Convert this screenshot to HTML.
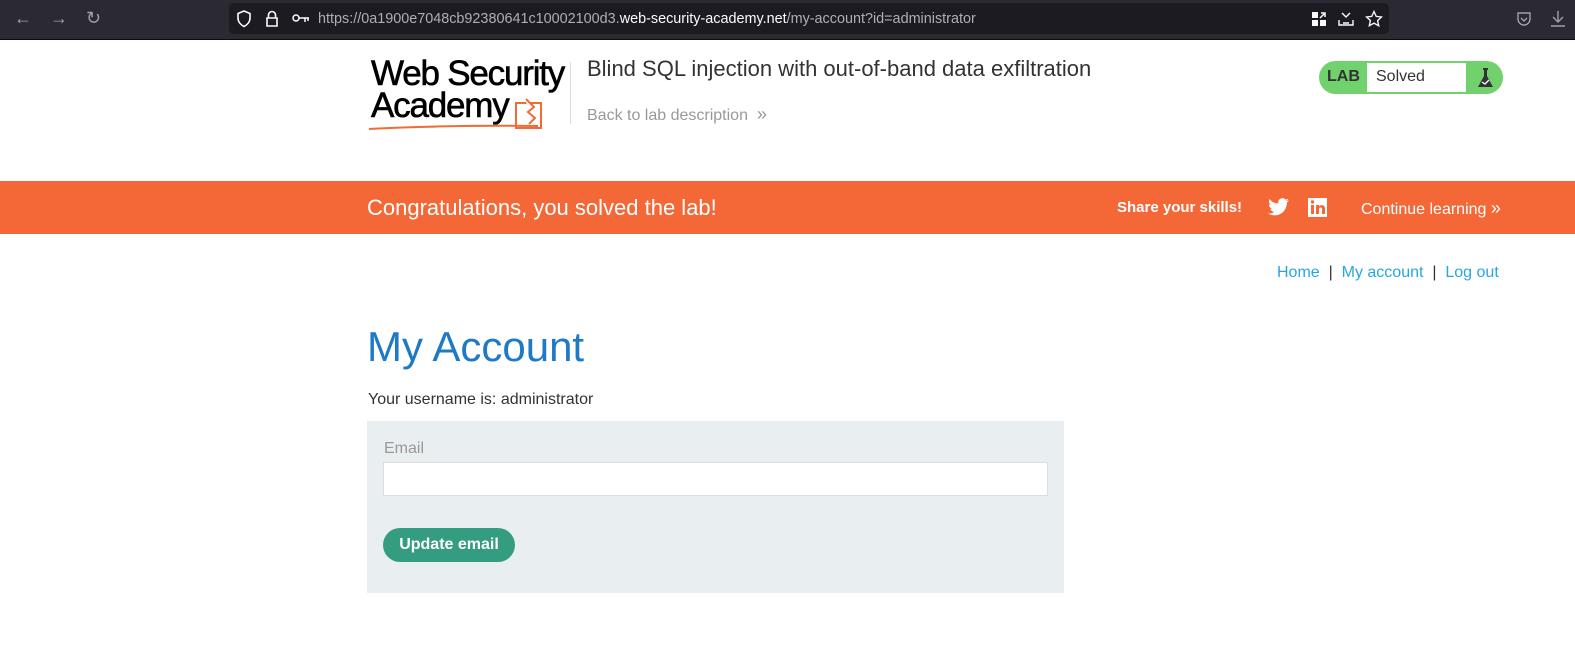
<!DOCTYPE html>
<html><head><meta charset="utf-8"><style>
*{margin:0;padding:0;box-sizing:border-box}
body{width:1575px;height:665px;overflow:hidden;background:#fff;font-family:"Liberation Sans",Arial,sans-serif;position:relative}
.abs{position:absolute}
#chrome{left:0;top:0;width:1575px;height:40px;background:#2b2a33;border-bottom:1px solid #0c0c0d}
#url{left:229px;top:3px;width:1160px;height:31px;background:#1c1b22;border-radius:5px}
.urltxt{left:318px;top:11px;font-size:14.4px;color:#aeaeb3;white-space:nowrap}
.urltxt b{color:#fbfbfe;font-weight:normal}
.ic{color:#a0a0a8;font-size:18px}
</style></head><body>
<div id="chrome" class="abs">
 <div class="abs ic" style="left:14px;top:8px">←</div>
 <div class="abs ic" style="left:50px;top:8px">→</div>
 <div class="abs ic" style="left:86px;top:8px">↻</div>
 <div id="url" class="abs"></div>
 <svg class="abs" style="left:236px;top:10px" width="16" height="18" viewBox="0 0 16 18"><path d="M8 1L2 3.5V8c0 4 3 7 6 8.5 3-1.5 6-4.5 6-8.5V3.5z" fill="none" stroke="#fbfbfe" stroke-width="1.6"/></svg>
 <svg class="abs" style="left:265px;top:10px" width="14" height="18" viewBox="0 0 14 18"><path d="M3.5 8V5a3.5 3.5 0 017 0v3M2 8h10v8H2z" fill="none" stroke="#fbfbfe" stroke-width="1.6"/></svg>
 <svg class="abs" style="left:292px;top:14px" width="18" height="10" viewBox="0 0 18 10"><circle cx="4" cy="4" r="3" fill="none" stroke="#fbfbfe" stroke-width="1.5"/><path d="M7 4h10M13 4v4M16 4v3" stroke="#fbfbfe" stroke-width="1.5" fill="none"/></svg>
 <div class="abs urltxt">https://0a1900e7048cb92380641c10002100d3.<b>web-security-academy.net</b>/my-account?id=administrator</div>
 <svg class="abs" style="left:1312px;top:12px" width="14" height="14"><rect x="0" y="0" width="6" height="6" fill="#fbfbfe"/><rect x="0" y="8" width="6" height="6" fill="#fbfbfe"/><rect x="8" y="8" width="6" height="6" fill="#fbfbfe"/><path d="M8 6L13 1M9 1h4v4" stroke="#fbfbfe" stroke-width="1.5" fill="none"/></svg>
 <svg class="abs" style="left:1338px;top:11px" width="16" height="16"><path d="M4 2l4 4 4-4M1 9v5h14V9M5 12h6" stroke="#fbfbfe" stroke-width="1.4" fill="none"/></svg>
 <svg class="abs" style="left:1365px;top:10px" width="18" height="18" viewBox="0 0 24 24"><path d="M12 2l3 6.5 7 .8-5.2 4.8 1.5 7L12 17.5 5.7 21l1.5-7L2 9.3l7-.8z" fill="none" stroke="#fbfbfe" stroke-width="1.8"/></svg>
 <svg class="abs" style="left:1516px;top:11px" width="16" height="16"><path d="M2 2h12v6a6 6 0 01-12 0z" fill="none" stroke="#a0a0a8" stroke-width="1.4"/><path d="M5 7l3 3 3-3" stroke="#a0a0a8" stroke-width="1.4" fill="none"/></svg>
 <svg class="abs" style="left:1550px;top:10px" width="16" height="18"><path d="M8 1v11M3 7l5 5 5-5M1 16h14" stroke="#a0a0a8" stroke-width="1.4" fill="none"/></svg>
</div>

<!-- header -->
<div class="abs" style="left:371px;top:58px;font-size:35px;line-height:32px;letter-spacing:-1.2px;color:#000;-webkit-text-stroke:0.6px #000">Web Security<br>Academy</div>
<svg class="abs" style="left:368px;top:95px" width="182" height="40"><path d="M1 34 Q80 30 170 31" stroke="#f26b34" stroke-width="2" fill="none"/><rect x="148" y="8" width="25" height="25" fill="none" stroke="#f26b34" stroke-width="2"/><path d="M158 4l8 8-6 5 7 6-6 6" stroke="#f26b34" stroke-width="2" fill="#fff"/></svg>
<div class="abs" style="left:570px;top:62px;width:1px;height:62px;background:#ddd"></div>
<div class="abs" style="left:587px;top:56px;font-size:22px;color:#333">Blind SQL injection with out-of-band data exfiltration</div>
<div class="abs" style="left:587px;top:104px;font-size:16px;color:#999">Back to lab description &nbsp;<span style="font-size:18px">»</span></div>

<div class="abs" style="left:1319px;top:61px;width:184px;height:33px;border-radius:17px;background:#70d16d"></div>
<div class="abs" style="left:1327px;top:68px;font-size:16px;font-weight:bold;color:#333">LAB</div>
<div class="abs" style="left:1367px;top:63px;width:99px;height:29px;background:#fff"></div>
<div class="abs" style="left:1376px;top:68px;font-size:16px;color:#333">Solved</div>
<svg class="abs" style="left:1477px;top:67px" width="18" height="22"><rect x="6" y="1" width="5" height="2" fill="#333"/><path d="M7 3h3v6l6 11H1l6-11z" fill="#333"/><path d="M5 15l3 2 4-4" stroke="#fff" stroke-width="1.3" fill="none"/></svg>

<!-- banner -->
<div class="abs" style="left:0;top:181px;width:1575px;height:53px;background:#f46837"></div>
<div class="abs" style="left:367px;top:195px;font-size:22px;color:#fff">Congratulations, you solved the lab!</div>
<div class="abs" style="left:1117px;top:199px;font-size:15px;font-weight:bold;color:#fff">Share your skills!</div>
<svg class="abs" style="left:1268px;top:198px" width="21" height="18" viewBox="0 0 24 20"><path d="M24 2.4a10 10 0 01-2.8.8A5 5 0 0023.3.4a10 10 0 01-3.1 1.2A4.9 4.9 0 0011.8 6 14 14 0 011.7 1a4.9 4.9 0 001.5 6.6 4.9 4.9 0 01-2.2-.6 4.9 4.9 0 003.9 4.9 5 5 0 01-2.2.1 4.9 4.9 0 004.6 3.4A9.9 9.9 0 010 17.4 14 14 0 007.5 19.6c9 0 14-7.5 14-14v-.6A10 10 0 0024 2.4z" fill="#fff"/></svg>
<svg class="abs" style="left:1308px;top:198px" width="19" height="19"><rect width="19" height="19" fill="#fff"/><rect x="3" y="7" width="3" height="9" fill="#f46837"/><circle cx="4.5" cy="4" r="1.7" fill="#f46837"/><path d="M8 7h3v1.5c1-2 6-2 6 2V16h-3v-5c0-2-3-2-3 0v5H8z" fill="#f46837"/></svg>
<div class="abs" style="left:1361px;top:198px;font-size:16px;color:#fff">Continue learning <span style="font-size:18px">»</span></div>

<!-- nav -->
<div class="abs" style="left:1277px;top:264px;font-size:16px;color:#333;white-space:nowrap"><span style="color:#29a5e3">Home</span> &nbsp;| &nbsp;<span style="color:#29a5e3">My account</span> &nbsp;| &nbsp;<span style="color:#29a5e3">Log out</span></div>

<div class="abs" style="left:367px;top:323px;font-size:42px;color:#1e79c6">My Account</div>
<div class="abs" style="left:368px;top:391px;font-size:16px;color:#333">Your username is: administrator</div>

<div class="abs" style="left:367px;top:421px;width:697px;height:172px;background:#e9eef1"></div>
<div class="abs" style="left:384px;top:440px;font-size:16px;color:#999">Email</div>
<div class="abs" style="left:383px;top:462px;width:665px;height:34px;background:#fff;border:1px solid #ddd"></div>
<div class="abs" style="left:383px;top:528px;width:132px;height:34px;border-radius:17px;background:#349c81;color:#fff;font-size:16px;font-weight:bold;text-align:center;line-height:34px">Update email</div>
</body></html>
